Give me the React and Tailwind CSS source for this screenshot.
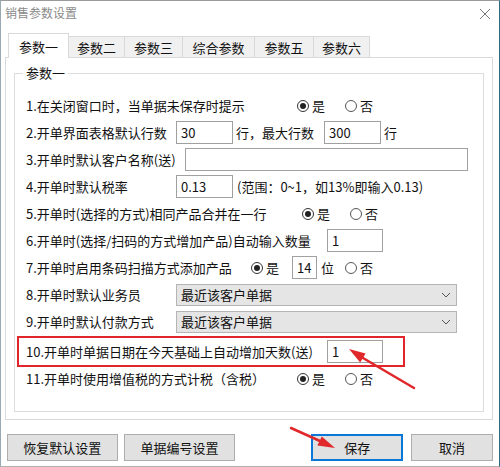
const tabs = [
  { label: '参数一', w: 'w-[61px]', active: true },
  { label: '参数二', w: 'w-[57px]' },
  { label: '参数三', w: 'w-[59px]' },
  { label: '综合参数', w: 'w-[73px]' },
  { label: '参数五', w: 'w-[60px]' },
  { label: '参数六', w: 'w-[57px]' },
]

function Radio({ checked, label }) {
  return (
    <span className="flex items-center">
      <span
        className={`flex h-[12px] w-[12px] items-center justify-center rounded-full border bg-white ${
          checked ? 'border-[#333]' : 'border-[#555]'
        }`}
      >
        {checked && <span className="h-[6px] w-[6px] rounded-full bg-[#222]" />}
      </span>
      <span className="ml-[3px]">{label}</span>
    </span>
  )
}

function YesNo() {
  return (
    <span className="flex items-center gap-[20px]">
      <Radio checked label="是" />
      <Radio label="否" />
    </span>
  )
}

function Field({ value, className = '' }) {
  return (
    <span
      className={`flex h-[23px] items-center border border-[#a0a0a0] bg-white pl-[4px] ${className}`}
    >
      {value}
    </span>
  )
}

function Dropdown({ value }) {
  return (
    <span className="flex h-[22px] w-[281px] items-center justify-between border border-[#b5b5b5] bg-[#e5e5e5] pl-[4px] pr-[4px]">
      {value}
      <svg width="10" height="6" viewBox="0 0 10 6" className="mr-[1px]">
        <polyline points="1,1 5,5 9,1" fill="none" stroke="#555" strokeWidth="1" />
      </svg>
    </span>
  )
}

function Row({ children, h = 'h-[27px]' }) {
  return <div className={`flex items-center pl-[9px] ${h}`}>{children}</div>
}

function Button({ children, className = '', primary }) {
  return (
    <button
      className={`flex h-[27px] items-center justify-center bg-[#e1e1e1] ${
        primary ? 'border-2 border-[#0a78d7]' : 'border border-[#adadad]'
      } ${className}`}
    >
      {children}
    </button>
  )
}

export default function App() {
  return (
    <div className="relative box-border h-[467px] w-[500px] overflow-hidden border-t border-b border-l border-r border-t-[#9a9a9a] border-b-[#b0b0b0] border-l-[#9aa8b4] border-r-[#2f6b7c] bg-white font-['Noto_Sans_CJK_SC',sans-serif] text-[13px] leading-none text-[#111]">
      {/* title bar */}
      <div className="flex h-[32px] items-start justify-between">
        <div className="flex h-[23px] items-center pl-[4px] text-[12px] text-[#8a8a8a]">销售参数设置</div>
        <svg width="12" height="12" viewBox="0 0 12 12" className="mr-[8px] mt-[7px]">
          <path d="M1 1 L11 11 M11 1 L1 11" stroke="#777" strokeWidth="1" />
        </svg>
      </div>

      {/* tab strip */}
      <div className="flex h-[24px] items-end pl-[7px]">
        {tabs.map((t, i) => (
          <div
            key={t.label}
            className={`flex items-center justify-center border-l border-r border-t border-[#d9d9d9] ${t.w} ${
              i > 0 ? '-ml-px' : ''
            } ${t.active ? 'relative z-10 -mb-px h-[25px] bg-white' : 'h-[21px] bg-[#f0f0f0]'}`}
          >
            {t.label}
          </div>
        ))}
      </div>

      {/* tab page */}
      <div className="ml-[4px] h-[363px] w-[488px] border border-[#d9d9d9] bg-white">
        <fieldset className="ml-[8px] mt-[6px] h-[348px] w-[470px] border border-[#dcdcdc] pl-[2px] pt-[10px]">
          <legend className="ml-[6px] px-[3px] leading-[18px]">参数一</legend>

          <Row>
            <span className="w-[271px] shrink-0">1.在关闭窗口时，当单据未保存时提示</span>
            <YesNo />
          </Row>

          <Row>
            <span className="w-[150px] shrink-0">2.开单界面表格默认行数</span>
            <Field value="30" className="w-[57px]" />
            <span className="ml-[3px]">行</span>
            <span className="w-[75px] shrink-0">，最大行数</span>
            <Field value="300" className="w-[57px]" />
            <span className="ml-[3px]">行</span>
          </Row>

          <Row>
            <span className="w-[159px] shrink-0">3.开单时默认客户名称(送)</span>
            <Field value="" className="h-[22px] w-[283px]" />
          </Row>

          <Row>
            <span className="w-[150px] shrink-0">4.开单时默认税率</span>
            <Field value="0.13" className="w-[57px]" />
            <span className="ml-[4px]">(范围：0~1，如13%即输入0.13)</span>
          </Row>

          <Row>
            <span className="w-[276px] shrink-0">5.开单时(选择的方式)相同产品合并在一行</span>
            <YesNo />
          </Row>

          <Row>
            <span className="w-[301px] shrink-0">6.开单时(选择/扫码的方式增加产品)自动输入数量</span>
            <Field value="1" className="h-[22px] w-[56px]" />
          </Row>

          <Row>
            <span className="w-[225px] shrink-0">7.开单时启用条码扫描方式添加产品</span>
            <Radio checked label="是" />
            <Field value="14" className="ml-[13px] w-[25px] pl-[2px]" />
            <span className="ml-[4px] w-[24px] shrink-0">位</span>
            <Radio label="否" />
          </Row>

          <Row>
            <span className="w-[150px] shrink-0">8.开单时默认业务员</span>
            <Dropdown value="最近该客户单据" />
          </Row>

          <Row>
            <span className="w-[150px] shrink-0">9.开单时默认付款方式</span>
            <Dropdown value="最近该客户单据" />
          </Row>

          <div className="mt-[1px] flex h-[31px] w-[388px] items-center border-2 border-[#e0252b] pl-[7px]">
            <span className="w-[301px] shrink-0">10.开单时单据日期在今天基础上自动增加天数(送)</span>
            <Field value="1" className="w-[56px] border-[#7a9dc6]" />
          </div>

          <Row h="h-[23px]">
            <span className="w-[271px] shrink-0">11.开单时使用增值税的方式计税（含税）</span>
            <YesNo />
          </Row>
        </fieldset>
      </div>

      {/* buttons */}
      <div className="mt-[14px] flex items-center px-[6px]">
        <Button className="w-[111px]">恢复默认设置</Button>
        <Button className="ml-[6px] w-[112px]">单据编号设置</Button>
        <Button primary className="ml-[76px] w-[92px]">保存</Button>
        <Button className="ml-[8px] w-[82px]">取消</Button>
      </div>

      {/* annotation arrows */}
      <svg className="pointer-events-none absolute left-0 top-0" width="500" height="467">
        <line x1="413" y1="387" x2="362" y2="357" stroke="#e0282a" strokeWidth="2.5" strokeLinecap="round" />
        <polygon points="348,348 364.6,352.6 359.2,361.6" fill="#e0282a" />
        <line x1="290" y1="427" x2="319" y2="440" stroke="#e0282a" strokeWidth="2.5" strokeLinecap="round" />
        <polygon points="334,447 316.4,444.6 320.8,435.6" fill="#e0282a" />
      </svg>
    </div>
  )
}
